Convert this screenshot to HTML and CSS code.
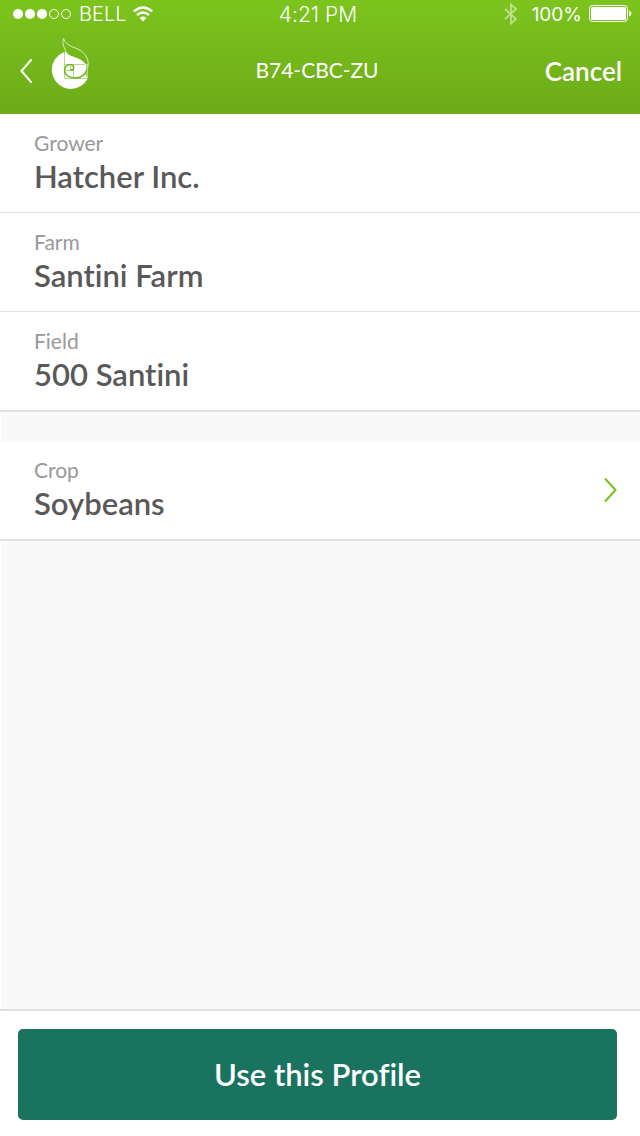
FILE: index.html
```html
<!DOCTYPE html>
<html lang="en">
    <head>
        <title>Profile</title>
        <meta charset="UTF-8">
        <meta name="viewport" content="width=device-width, initial-scale=1.0">
        <link rel="stylesheet" href="styles.css">
    </head>
    <body>
        <header class="header">
            <!-- phone status -->
            <div class="status">
                <div class="status-left">
                    <svg class="signal" width="60" height="12" viewBox="0 0 60 12" role="img" aria-label="Signal">
                        <g fill="#fff">
                            <circle cx="6" cy="6" r="5"/>
                            <circle cx="18" cy="6" r="5"/>
                            <circle cx="30" cy="6" r="5"/>
                        </g>
                        <g fill="none" stroke="#fff" stroke-width="1">
                            <circle cx="42" cy="6" r="4.5"/>
                            <circle cx="54" cy="6" r="4.5"/>
                        </g>
                    </svg>
                    <span>BELL</span>
                    <svg width="20" height="16" viewBox="0 0 20 16" role="img" aria-label="Wi-Fi">
                        <g fill="none" stroke="#fff" stroke-width="2.5">
                            <path d="M.8 5.4Q10-2.4 19.2 5.4"/>
                            <path d="M4 9Q10 4 16 9"/>
                        </g>
                        <path fill="#fff" d="M6.6 12Q10 9.2 13.4 12L10 15.6z"/>
                    </svg>
                </div>
                <span class="clock">4:21 PM</span>
                <div class="status-right">
                    <svg width="14" height="22" viewBox="0 0 14 22" role="img" aria-label="Bluetooth">
                        <path fill="none" stroke="#fff" stroke-opacity=".5" stroke-width="1.8" d="M1 6l11 10-5 4.500V1.500L12 6 1 16"/>
                    </svg>
                    <span class="percent">100%</span>
                    <svg width="43" height="18" viewBox="0 0 43 18" role="img" aria-label="Battery">
                        <rect x=".5" y=".5" width="38" height="16" rx="3" fill="none" stroke="#fff"/>
                        <rect x="2" y="2" width="35" height="13" rx="1.5" fill="#fff"/>
                        <path fill="#fff" d="M40 5.500q2.500 1 2.500 3T40 11.500z"/>
                    </svg>
                </div>
            </div>
            <nav class="nav">
                <a class="back" href="#" aria-label="Back">
                    <svg width="12" height="26" viewBox="0 0 12 26">
                        <path fill="none" stroke="#fff" stroke-width="2" stroke-linecap="round" d="M11 2L1.500 13 11 24"/>
                    </svg>
                    <svg width="40" height="54" viewBox="0 0 40 54">
                        <!-- seed body, cut off by the leaf on the upper right -->
                        <path fill="#fff" d="M16 14.500C19 20 26 19.500 32 23.500C37 27 38.500 32 36 37L37.500 42A19 19 0 1 1 16 14.500z"/>
                        <!-- leaf outline -->
                        <path fill="none" stroke="#fff" stroke-opacity=".7" d="M16 14.500C13 9 12.500 5 13.500 1.500C17 11 27 9.500 33 15.500C39 21 39 28 37 33"/>
                        <!-- golden spiral -->
                        <g fill="none" stroke="#6fb31a">
                            <path stroke-opacity=".5" d="M14.500 15V41.500H37.500M14.500 27.500H35M23.500 27.500V41.500M14.500 33.500H23.500M20.500 27.500V33.500"/>
                            <path stroke-width="1.5" d="M37.500 29C37.500 36 32 41 25 41C18.500 41 14.500 37.500 14.500 33.500C14.500 30 17 27.500 20 27.500C22.500 27.500 24 29.500 23.500 31.500C23 33.500 20.500 33.500 20.500 32"/>
                        </g>
                        <path fill="none" stroke="#fff" stroke-opacity=".5" d="M35 27.500H37.500V41"/>
                    </svg>
                </a>
                <h1 class="title">B74-CBC-ZU</h1>
                <button class="cancel" type="button">Cancel</button>
            </nav>
        </header>
        <main class="content">
            <dl class="group">
                <div class="row">
                    <dt class="label">Grower</dt>
                    <dd class="value">Hatcher Inc.</dd>
                </div>
                <div class="row">
                    <dt class="label">Farm</dt>
                    <dd class="value">Santini Farm</dd>
                </div>
                <div class="row">
                    <dt class="label">Field</dt>
                    <dd class="value">500 Santini</dd>
                </div>
            </dl>
            <a class="group row crop" href="#">
                <span>
                    <span class="label">Crop</span>
                    <span class="value">Soybeans</span>
                </span>
                <svg width="14" height="26" viewBox="0 0 14 26" aria-hidden="true">
                    <path fill="none" stroke="#7ac11b" stroke-width="2" d="M2 1.500L12.500 13 2 24.500"/>
                </svg>
            </a>
        </main>
        <footer class="footer">
            <button class="use-button" type="button">Use this Profile</button>
        </footer>
    </body>
</html>
```
FILE: styles.css
```css
*, *:before, *:after {
    box-sizing: border-box;
}
body {
    margin: 0;
    min-height: 100vh;
    display: flex;
    flex-direction: column;
    background: #fff;
    color: #595959;
    font-family: Lato, sans-serif;
    font-variant-ligatures: none;
}
button {
    border: 0;
    color: #fff;
    font-family: inherit;
    font-variant-ligatures: inherit;
    font-weight: 600;
}
svg {
    display: block;
}
.header {
    background: linear-gradient(#7cc41d, #6dab19);
    color: #fff;
}
.status,
.nav {
    display: grid;
    grid-template-columns: 1fr auto 1fr;
    align-items: center;
}
.status {
    height: 28px;
    padding: 0 8px 0 4px;
    font-family: Inter, sans-serif;
    font-size: 20px;
    font-weight: 300;
}
.status-left,
.status-right {
    display: flex;
    align-items: center;
    gap: 7px;
}
.status-left {
    padding-left: 8px;
}
.status-right {
    justify-content: flex-end;
}
.clock {
    font-size: 21px;
}
.percent {
    padding-left: 7px;
    font-size: 19px;
    font-weight: 400;
}
.nav {
    height: 86px;
    padding: 0 18px 0 12px;
}
.back {
    display: flex;
    align-items: center;
    gap: 18px;
    padding: 0 0 14px 8px;
}
.back svg:first-child {
    margin-top: 14px;
}
.title {
    margin: 0;
    padding-bottom: 4px;
    font-size: 21px;
    font-weight: 400;
}
.cancel {
    justify-self: end;
    padding: 0;
    background: none;
    font-size: 26px;
}
.content {
    flex: 1;
    border-left: 1px solid #fff;
    background: #f9f9f9;
}
.group {
    display: block;
    margin: 0 0 29px -1px;
    background: #fff;
    border-bottom: 2px solid #e0e0e0;
    box-shadow: 0 1px #fff;
}
.row {
    padding: 16px 23px 16px 34px;
    color: inherit;
    text-decoration: none;
}
.row + .row {
    border-top: 1px solid #e0e0e0;
}
.label,
.value {
    display: block;
    margin: 0;
}
.label {
    color: #999;
    font-size: 21px;
    line-height: 26px;
}
.value {
    font-size: 31px;
    font-weight: 600;
    line-height: 40px;
}
.crop {
    display: flex;
    align-items: center;
    justify-content: space-between;
    margin-bottom: 0;
}
.footer {
    padding: 18px 23px 16px 18px;
    border-top: 2px solid #e0e0e0;
}
.use-button {
    display: block;
    width: 100%;
    padding: 27px;
    border-radius: 5px;
    background: #19735f;
    font-size: 31px;
    line-height: 37px;
}
```
